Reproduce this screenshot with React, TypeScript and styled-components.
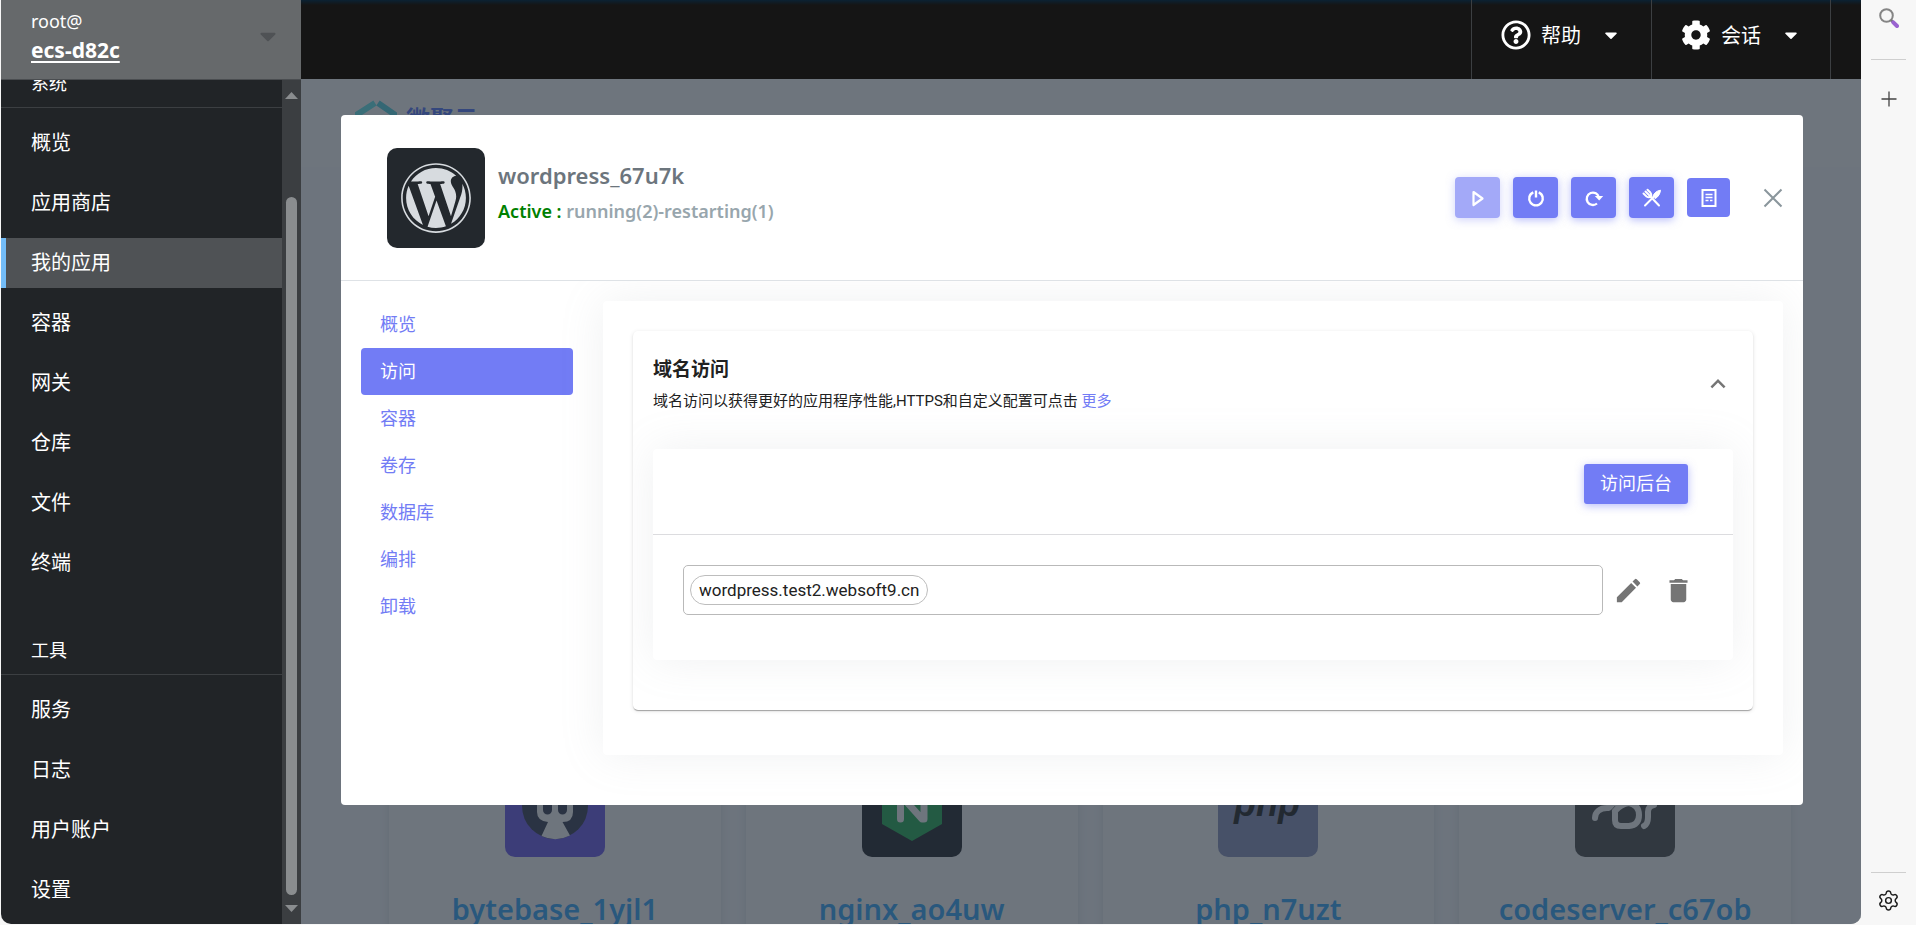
import React from "react";
import styled, { createGlobalStyle, css } from "styled-components";
import { FaCaretDown, FaCog, FaRegQuestionCircle, FaWordpress } from "react-icons/fa";
import { MdDelete, MdEdit, MdExpandLess } from "react-icons/md";
import { Settings } from "lucide-react";

const uiFont = `"Noto Sans", "Noto Sans CJK SC", sans-serif`;
const materialFont = `Roboto, "Noto Sans CJK SC", sans-serif`;
const accent = "#727cf5";

const GlobalStyle = createGlobalStyle`
  *, *::before, *::after { box-sizing: border-box; }
  body { margin: 0; background: #f7f7f7; font-family: ${uiFont}; }
  button { font-family: inherit; cursor: pointer; }
  svg { display: block; flex: none; }
`;

/* ---------- shell ---------- */

const Shell = styled.div`
  display: grid;
  grid-template-columns: minmax(0, 1fr) 55px;
  height: 100vh;
  overflow: hidden;
`;

const Window = styled.div`
  display: grid;
  grid-template-columns: 300px minmax(0, 1fr);
  margin: 0 0 1px 1px;
  min-height: 0;
  overflow: hidden;
  border-radius: 0 0 10px 10px;
  background: #212427;
`;

const Rail = styled.aside`
  display: flex;
  flex-direction: column;
  align-items: center;
  padding: 6px 0 13px;
`;

const RailButton = styled.button`
  display: grid;
  place-items: center;
  width: 32px;
  height: 24px;
  padding: 0;
  border: 0;
  background: none;
  color: #1b1b1b;
`;

const RailLine = styled.hr`
  width: 35px;
  height: 1px;
  margin: 29px 0 27px;
  border: 0;
  background: #cfcfcf;
`;

const RailFoot = styled.div`
  display: flex;
  flex-direction: column;
  align-items: center;
  gap: 15px;
  margin-top: auto;

  ${RailLine} { margin: 0; }
`;

/* ---------- sidebar ---------- */

const Sidebar = styled.aside`
  display: flex;
  flex-direction: column;
  min-height: 0;
  color: #fff;
`;

const HostButton = styled.button`
  display: flex;
  align-items: center;
  justify-content: space-between;
  flex: none;
  height: 80px;
  padding: 0 20px 8px 30px;
  border: 0;
  border-bottom: 1px solid #4a4d50;
  background: #66696b;
  color: #fff;
  text-align: left;
`;

const HostText = styled.span`
  display: flex;
  flex-direction: column;
`;

const HostUser = styled.span`
  font-size: 18px;
  line-height: 28px;
`;

const HostName = styled.span`
  font-size: 21px;
  font-weight: 700;
  line-height: 30px;
  text-decoration: underline;
  text-underline-offset: 3px;
`;

const NavArea = styled.div`
  display: flex;
  flex: 1;
  min-height: 0;
`;

const NavScroll = styled.nav`
  display: flex;
  flex: 1;
  flex-direction: column;
  justify-content: flex-end;
  overflow: hidden;
  padding-bottom: 9px;
`;

const NavGroup = styled.section`
  flex: none;

  & + & { margin-top: 39px; }
`;

const NavHeading = styled.h2`
  height: 48px;
  margin: 0;
  padding-left: 30px;
  border-bottom: 1px solid #3c3f42;
  font-size: 18px;
  font-weight: 400;
  line-height: 46px;
`;

const NavItem = styled.a<{ $active?: boolean }>`
  display: block;
  height: 50px;
  margin-top: 10px;
  padding-left: 25px;
  border-left: 5px solid ${(p) => (p.$active ? "#73bcf7" : "transparent")};
  background: ${(p) => (p.$active ? "#4f5255" : "transparent")};
  color: #fff;
  font-size: 20px;
  line-height: 50px;
  text-decoration: none;
`;

const ScrollTrack = styled.div`
  display: flex;
  flex-direction: column;
  align-items: center;
  width: 19px;
  padding: 12px 0 12px;
  background: #3b3e41;
`;

const ScrollThumb = styled.div`
  flex: 1;
  width: 11px;
  margin: 98px 0 10px;
  border-radius: 6px;
  background: #8a8d8f;
`;

/* ---------- main column ---------- */

const Main = styled.div`
  display: flex;
  flex-direction: column;
  min-width: 0;
  min-height: 0;
`;

const TopBar = styled.header`
  display: flex;
  flex: none;
  justify-content: flex-end;
  height: 79px;
  padding-right: 30px;
  background: linear-gradient(#0b2233, #151515 5px);
`;

const TopMenu = styled.button`
  display: flex;
  align-items: center;
  gap: 10px;
  width: 180px;
  padding: 0 0 10px 29px;
  border: 0;
  border-left: 1px solid #3c3f42;
  background: none;
  color: #fff;
  font-size: 20px;

  &:last-child { border-right: 1px solid #3c3f42; }

  svg:last-child { margin-left: 10px; }
`;

const Stage = styled.div`
  position: relative;
  flex: 1;
  min-height: 0;
  overflow: hidden;
  background: #fafbfe;
`;

const BrandBar = styled.div`
  display: flex;
  gap: 9px;
  height: 88px;
  padding: 21px 54px;
  background: #fff;
`;

const BrandName = styled.span`
  color: #3e65ff;
  font-size: 24px;
  font-weight: 700;
  line-height: 38px;
`;

const AppGrid = styled.div`
  display: grid;
  grid-template-columns: repeat(4, minmax(0, 1fr));
  gap: 25px;
  padding: 533px 70px 0 88px;
`;

const AppCard = styled.article`
  display: flex;
  flex-direction: column;
  align-items: center;
  gap: 32px;
  height: 320px;
  padding-top: 57px;
  background: #fff;
  box-shadow: 0 0 8px rgba(154, 161, 171, 0.3);
`;

const AppName = styled.h3`
  margin: 0;
  color: #1a9eff;
  font-size: 29px;
  font-weight: 600;
  line-height: 40px;
`;

/* ---------- dialog ---------- */

const Backdrop = styled.div`
  position: absolute;
  inset: 0;
  padding: 36px 58px 0 40px;
  background: rgba(49, 58, 70, 0.7);
`;

const Dialog = styled.div`
  overflow: hidden;
  border-radius: 4px;
  background: #fff;
`;

const DialogHead = styled.div`
  display: flex;
  align-items: center;
  gap: 13px;
  height: 166px;
  padding: 0 20px 0 46px;
  border-bottom: 1px solid #dee2e6;
`;

const WordpressTile = styled.div`
  display: grid;
  place-items: center;
  width: 98px;
  height: 100px;
  border-radius: 10px;
  background: #23282d;
  color: #d7dbdf;
`;

const Summary = styled.div`
  flex: 1;
  padding-bottom: 8px;
`;

const AppTitle = styled.h1`
  margin: 0;
  color: #6c757d;
  font-size: 22px;
  font-weight: 600;
  line-height: 35px;
`;

const Status = styled.p`
  margin: 0;
  color: #98a6ad;
  font-size: 18px;
  font-weight: 600;
  line-height: 37px;

  strong { color: #008000; font-weight: 600; }
`;

const Actions = styled.div`
  display: flex;
  align-items: center;
  gap: 13px;
`;

const ActionButton = styled.button<{ $flat?: boolean }>`
  display: grid;
  place-items: center;
  width: ${(p) => (p.$flat ? 43 : 45)}px;
  height: ${(p) => (p.$flat ? 39 : 41)}px;
  padding: 0;
  border: 0;
  border-radius: 4px;
  background: ${accent};
  color: #fff;
  box-shadow: ${(p) => (p.$flat ? "none" : "0 2px 8px rgba(114, 124, 245, 0.5)")};

  &:disabled { opacity: 0.65; }
`;

const CloseButton = styled.button`
  display: grid;
  place-items: center;
  width: 20px;
  height: 20px;
  margin-left: 20px;
  padding: 0;
  border: 0;
  background: none;
  color: #8a969c;
`;

const DialogBody = styled.div`
  display: grid;
  grid-template-columns: 212px minmax(0, 1fr);
  align-items: start;
  gap: 30px;
  padding: 20px 20px 50px;
  overflow: hidden;
`;

const Tabs = styled.nav`
  display: flex;
  flex-direction: column;
`;

const Tab = styled.a<{ $active?: boolean }>`
  height: 47px;
  padding-left: 19px;
  border-radius: 4px;
  background: ${(p) => (p.$active ? accent : "transparent")};
  color: ${(p) => (p.$active ? "#fff" : accent)};
  font-size: 18px;
  line-height: 46px;
  text-decoration: none;
`;

const softCard = css`
  border-radius: 4px;
  background: #fff;
  box-shadow: 0 0 44px rgba(154, 161, 171, 0.15);
`;

const Panel = styled.section`
  ${softCard}
  padding: 30px 30px 45px;
`;

const Accordion = styled.section`
  padding: 24px 20px 50px;
  border-radius: 5px;
  background: #fff;
  box-shadow: 0 2px 1px -1px rgba(0, 0, 0, 0.2), 0 1px 1px rgba(0, 0, 0, 0.14), 0 1px 4px rgba(0, 0, 0, 0.12);
  color: #212121;
  font-family: ${materialFont};
  overflow: hidden;
`;

const AccordionHead = styled.div`
  display: flex;
  align-items: center;
  justify-content: space-between;
  margin-bottom: 36px;
`;

const AccordionTitle = styled.h2`
  margin: 0 0 4px;
  font-size: 19px;
  font-weight: 700;
  line-height: 30px;
`;

const AccordionNote = styled.p`
  margin: 0;
  font-size: 15px;
  line-height: 24px;

  a { color: ${accent}; text-decoration: none; }
`;

const IconButton = styled.button<{ $size: number }>`
  display: grid;
  place-items: center;
  width: ${(p) => p.$size}px;
  height: ${(p) => p.$size}px;
  padding: 0;
  border: 0;
  background: none;
  color: #757575;
`;

const DomainCard = styled.div`
  ${softCard}
`;

const DomainHead = styled.div`
  display: flex;
  justify-content: flex-end;
  height: 86px;
  padding: 15px 45px;
  border-bottom: 1px solid #dcdcdf;
`;

const PrimaryButton = styled.button`
  height: 40px;
  padding: 0 16px;
  border: 0;
  border-radius: 3px;
  background: ${accent};
  box-shadow: 0 2px 8px rgba(114, 124, 245, 0.5);
  color: #fff;
  font-size: 18px;
  line-height: 38px;
`;

const DomainRow = styled.div`
  display: flex;
  align-items: center;
  padding: 30px 30px 45px;
`;

const DomainField = styled.div`
  display: flex;
  flex: 1;
  align-items: center;
  height: 50px;
  padding: 0 6px;
  border: 1px solid #b9b9b9;
  border-radius: 5px;

  input {
    flex: 1;
    min-width: 0;
    height: 30px;
    border: 0;
    outline: 0;
    background: none;
    font: 400 17px ${materialFont};
  }
`;

const Chip = styled.span`
  height: 30px;
  padding: 0 8px;
  border: 1px solid #bdbdbd;
  border-radius: 15px;
  font-size: 17px;
  line-height: 28px;
`;

/* ---------- drawings ---------- */

const ScrollArrow = ({ up }: { up?: boolean }) => (
  <svg width="13" height="7" viewBox="0 0 13 7" fill="#8a8d8f">
    <path d={up ? "M0 7 6.500 0 13 7Z" : "M0 0H13L6.500 7Z"} />
  </svg>
);

const HexMark = () => (
  <svg width="42" height="48" viewBox="0 0 42 48" fill="none" strokeWidth="6">
    <path d="M20 3 3 14v20l17 11" stroke="#50e6ee" />
    <path d="M23 3 39 14v20L23 45" stroke="#3fcfe0" />
  </svg>
);

const BytebaseLogo = () => (
  <svg width="100" height="100" viewBox="0 0 100 100">
    <rect width="100" height="100" rx="10" fill="#5944ed" />
    <circle cx="50" cy="49" r="33" fill="#1d233c" />
    <path d="M32 30H38V53a4.500 4.500 0 0 0 9 0V30H53V53a4.500 4.500 0 0 0 9 0V30H68V55Q68 65 57.500 65L65 78.500A33 33 0 0 1 36.500 79L43 65Q32 64 32 55Z" fill="#fff" />
  </svg>
);

const NginxLogo = () => (
  <svg width="100" height="100" viewBox="0 0 100 100">
    <rect width="100" height="100" rx="10" fill="#03050a" />
    <path d="M50 16 80 33V67L50 84 20 67V33Z" fill="#06a53f" />
    <path d="M38.500 62V38L60 62H62V38" fill="none" stroke="#fff" strokeWidth="7" strokeLinecap="round" strokeLinejoin="round" />
  </svg>
);

const PhpLogo = () => (
  <svg width="100" height="100" viewBox="0 0 100 100">
    <rect width="100" height="100" rx="10" fill="#7e87b7" />
    <text x="49" y="59" textAnchor="middle" fontFamily="Liberation Sans" fontSize="36" fontWeight="700" fontStyle="italic" fill="#000">php</text>
  </svg>
);

const CodeServerLogo = () => (
  <svg width="100" height="100" viewBox="0 0 100 100">
    <rect width="100" height="100" rx="10" fill="#323334" />
    <g fill="none" stroke="#fff" strokeWidth="6" strokeLinecap="round">
      <path d="M20 61C20 55 25 51 32 51c5 0 3-5 9-5" />
      <path d="M40 54V63Q40 69 46 69H54Q64 68 64 58T54 46Q46 47 40 54" />
      <path d="M69 69Q73 67 73 60V55Q73 49 79 48" />
    </g>
  </svg>
);

const PlayIcon = () => (
  <svg width="20" height="20" viewBox="0 0 20 20" fill="none" stroke="currentColor" strokeWidth="2.200">
    <path d="M5.500 4 14.500 10.500 5.500 17Z" strokeLinejoin="round" />
  </svg>
);

const PowerIcon = () => (
  <svg width="20" height="20" viewBox="0 0 20 20" fill="none" stroke="currentColor" strokeWidth="2.400">
    <path d="M7.300 4.300A6.800 6.800 0 1 0 12.700 4.300M10 2.500V9.500" />
  </svg>
);

const ReloadIcon = () => (
  <svg width="20" height="20" viewBox="0 0 20 20">
    <path d="M15 9.500A6.200 6.200 0 1 0 13 15.500" fill="none" stroke="currentColor" strokeWidth="2.300" />
    <path d="M10.800 8H19.200L15.200 12.500Z" fill="currentColor" />
  </svg>
);

const ToolsIcon = () => (
  <svg width="20" height="20" viewBox="0 0 20 20" fill="none" stroke="currentColor" strokeWidth="2" strokeLinecap="round">
    <path d="M8 8 17 17.500M1.500 5.500 4.500 8.500Q7 10 8.500 8.500T8.300 4.500L5.500 1.800M3.500 3.500 7 7" />
    <path d="M3 17.500 12.500 8" />
    <path d="M11 8Q13 3 18.500 2.200 18 7.500 13.500 10.500Z" fill="currentColor" strokeWidth="1" />
  </svg>
);

const DocIcon = () => (
  <svg width="20" height="20" viewBox="0 0 20 20" fill="none" stroke="currentColor">
    <rect x="3.500" y="2" width="13" height="16" strokeWidth="2" />
    <path d="M6.500 6.500H13.500M6.500 9.500H13.500M6.500 12.500H9.500M11 12.500H13.500" strokeWidth="1.500" />
  </svg>
);

const CrossIcon = () => (
  <svg width="20" height="20" viewBox="0 0 20 20" fill="none" stroke="currentColor" strokeWidth="2">
    <path d="M1.500 1.500 18.500 18.500M18.500 1.500 1.500 18.500" />
  </svg>
);

const SearchIcon = () => (
  <svg width="20" height="20" viewBox="0 0 20 20" fill="none">
    <circle cx="7.500" cy="7.500" r="6.300" stroke="#858585" strokeWidth="2" />
    <path d="M12 12 14 14" stroke="#777" strokeWidth="2.500" />
    <path d="M14.300 14.300 18 18" stroke="#9a63d0" strokeWidth="4" strokeLinecap="round" />
  </svg>
);

const PlusIcon = () => (
  <svg width="16" height="16" viewBox="0 0 16 16" fill="none" stroke="#444" strokeWidth="1.300">
    <path d="M8 .5V15.500M.5 8H15.500" />
  </svg>
);

/* ---------- data ---------- */

const navGroups = [
  { title: "系统", items: ["概览", "应用商店", "我的应用", "容器", "网关", "仓库", "文件", "终端"] },
  { title: "工具", items: ["服务", "日志", "用户账户", "设置"] },
];

const tabs = ["概览", "访问", "容器", "卷存", "数据库", "编排", "卸载"];

const apps = [
  { name: "bytebase_1yjl1", logo: <BytebaseLogo /> },
  { name: "nginx_ao4uw", logo: <NginxLogo /> },
  { name: "php_n7uzt", logo: <PhpLogo /> },
  { name: "codeserver_c67ob", logo: <CodeServerLogo /> },
];

export default function App() {
  return (
    <Shell>
      <GlobalStyle />
      <Window>
        <Sidebar>
          <HostButton type="button">
            <HostText>
              <HostUser>root@</HostUser>
              <HostName>ecs-d82c</HostName>
            </HostText>
            <FaCaretDown size={26} color="#4f5255" />
          </HostButton>
          <NavArea>
            <NavScroll>
              {navGroups.map((group) => (
                <NavGroup key={group.title}>
                  <NavHeading>{group.title}</NavHeading>
                  {group.items.map((item) => (
                    <NavItem key={item} href="#" $active={item === "我的应用"}>
                      {item}
                    </NavItem>
                  ))}
                </NavGroup>
              ))}
            </NavScroll>
            <ScrollTrack>
              <ScrollArrow up />
              <ScrollThumb />
              <ScrollArrow />
            </ScrollTrack>
          </NavArea>
        </Sidebar>

        <Main>
          <TopBar>
            <TopMenu type="button">
              <FaRegQuestionCircle size={30} />
              帮助
              <FaCaretDown size={20} />
            </TopMenu>
            <TopMenu type="button">
              <FaCog size={30} />
              会话
              <FaCaretDown size={20} />
            </TopMenu>
          </TopBar>

          <Stage>
            <BrandBar>
              <HexMark />
              <BrandName>微聚云</BrandName>
            </BrandBar>
            <AppGrid>
              {apps.map((app) => (
                <AppCard key={app.name}>
                  {app.logo}
                  <AppName>{app.name}</AppName>
                </AppCard>
              ))}
            </AppGrid>

            <Backdrop>
              <Dialog role="dialog" aria-labelledby="app-title">
                <DialogHead>
                  <WordpressTile>
                    <FaWordpress size={72} />
                  </WordpressTile>
                  <Summary>
                    <AppTitle id="app-title">wordpress_67u7k</AppTitle>
                    <Status>
                      <strong>Active :</strong> running(2)-restarting(1)
                    </Status>
                  </Summary>
                  <Actions>
                    <ActionButton type="button" aria-label="启动" disabled><PlayIcon /></ActionButton>
                    <ActionButton type="button" aria-label="停止"><PowerIcon /></ActionButton>
                    <ActionButton type="button" aria-label="重启"><ReloadIcon /></ActionButton>
                    <ActionButton type="button" aria-label="重建"><ToolsIcon /></ActionButton>
                    <ActionButton type="button" aria-label="文档" $flat><DocIcon /></ActionButton>
                  </Actions>
                  <CloseButton type="button" aria-label="关闭"><CrossIcon /></CloseButton>
                </DialogHead>

                <DialogBody>
                  <Tabs>
                    {tabs.map((tab) => (
                      <Tab key={tab} href="#" $active={tab === "访问"}>{tab}</Tab>
                    ))}
                  </Tabs>
                  <Panel>
                    <Accordion>
                      <AccordionHead>
                        <div>
                          <AccordionTitle>域名访问</AccordionTitle>
                          <AccordionNote>
                            域名访问以获得更好的应用程序性能,HTTPS和自定义配置可点击 <a href="#">更多</a>
                          </AccordionNote>
                        </div>
                        <IconButton type="button" aria-label="收起" $size={30}>
                          <MdExpandLess size={30} />
                        </IconButton>
                      </AccordionHead>
                      <DomainCard>
                        <DomainHead>
                          <PrimaryButton type="button">访问后台</PrimaryButton>
                        </DomainHead>
                        <DomainRow>
                          <DomainField>
                            <Chip>wordpress.test2.websoft9.cn</Chip>
                            <input type="text" aria-label="域名" />
                          </DomainField>
                          <IconButton type="button" aria-label="编辑" $size={50}><MdEdit size={31} /></IconButton>
                          <IconButton type="button" aria-label="删除" $size={50}><MdDelete size={31} /></IconButton>
                        </DomainRow>
                      </DomainCard>
                    </Accordion>
                  </Panel>
                </DialogBody>
              </Dialog>
            </Backdrop>
          </Stage>
        </Main>
      </Window>

      <Rail>
        <RailButton type="button" aria-label="搜索"><SearchIcon /></RailButton>
        <RailLine />
        <RailButton type="button" aria-label="添加"><PlusIcon /></RailButton>
        <RailFoot>
          <RailLine />
          <RailButton type="button" aria-label="设置"><Settings size={23} strokeWidth={1.5} /></RailButton>
        </RailFoot>
      </Rail>
    </Shell>
  );
}
